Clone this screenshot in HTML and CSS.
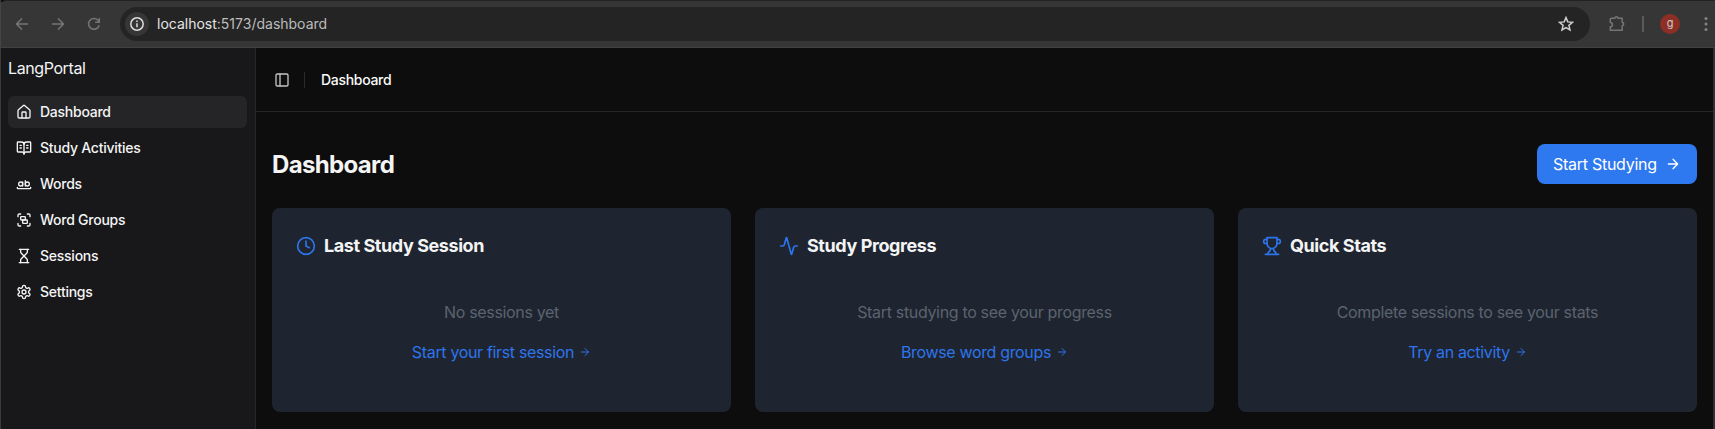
FILE: index.html
```html
<!DOCTYPE html>
<html lang="en">
<head>
<meta charset="utf-8">
<title>LangPortal</title>
<link rel="stylesheet" href="styles.css">
</head>
<body>
<div class="window">
  <header class="browser">
    <div class="browser-nav">
      <svg class="b-icon" viewBox="0 0 16 16"><path d="M14 8H3M8 2.500 2.500 8 8 13.500"/></svg>
      <svg class="b-icon" viewBox="0 0 16 16"><path d="M2 8h11M8 2.500 13.500 8 8 13.500"/></svg>
      <svg class="b-icon" viewBox="0 0 16 16"><path d="M13.200 9.200A5.400 5.400 0 1 1 11.900 4.200L13.200 5.500M13.300 2v4.200H9.100"/></svg>
    </div>
    <div class="address">
      <span class="site-info"><svg class="info-icon" viewBox="0 0 16 16"><circle cx="8" cy="8" r="6.200"/><path d="M8 7.200v4M8 4.500v1.500"/></svg></span>
      <span class="url">localhost<span class="url-rest">:5173/dashboard</span></span>
      <svg class="star" viewBox="0 0 16 16"><path d="m8 1.600 1.800 4.300 4.700.4-3.600 3 1.100 4.600L8 11.500l-4 2.400 1.100-4.600-3.600-3 4.700-.4z"/></svg>
    </div>
    <div class="browser-tools">
      <svg class="puzzle" viewBox="0 0 18 18"><path d="M3.300 3.200h3.600a1.500 1.500 0 0 1 3 0h4.300v4.300a1.500 1.500 0 0 1 0 3v4.800H2.300v-3.500a2.100 2.100 0 0 0 0-4.200V4.200a1 1 0 0 1 1-1z"/></svg>
      <span class="tool-divider"></span>
      <span class="avatar">g</span>
      <svg class="dots" viewBox="0 0 4 16"><circle cx="2" cy="2.500" r="1.500"/><circle cx="2" cy="8" r="1.500"/><circle cx="2" cy="13.500" r="1.500"/></svg>
    </div>
  </header>
  <div class="app">
    <aside class="sidebar">
      <div class="brand"><span class="brand-name">LangPortal</span></div>
      <nav class="menu">
        <a class="item active"><svg class="icon" viewBox="0 0 24 24"><path d="M15 21v-8a1 1 0 0 0-1-1h-4a1 1 0 0 0-1 1v8"/><path d="M3 10a2 2 0 0 1 .709-1.528l7-5.999a2 2 0 0 1 2.582 0l7 5.999A2 2 0 0 1 21 10v9a2 2 0 0 1-2 2H5a2 2 0 0 1-2-2z"/></svg><span>Dashboard</span></a>
        <a class="item"><svg class="icon" viewBox="0 0 24 24"><path d="M12 7v14M16 12h2M16 8h2M6 12h2M6 8h2"/><path d="M3 18a1 1 0 0 1-1-1V4a1 1 0 0 1 1-1h5a4 4 0 0 1 4 4 4 4 0 0 1 4-4h5a1 1 0 0 1 1 1v13a1 1 0 0 1-1 1h-6a3 3 0 0 0-3 3 3 3 0 0 0-3-3z"/></svg><span>Study Activities</span></a>
        <a class="item"><svg class="icon" viewBox="0 0 24 24"><circle cx="7" cy="12" r="3"/><path d="M10 9v6"/><circle cx="17" cy="12" r="3"/><path d="M14 7v8"/><path d="M22 17v1c0 .5-.5 1-1 1H3c-.5 0-1-.5-1-1v-1"/></svg><span>Words</span></a>
        <a class="item"><svg class="icon" viewBox="0 0 24 24"><path d="M3 7V5c0-1.100.9-2 2-2h2M17 3h2c1.100 0 2 .9 2 2v2M21 17v2c0 1.100-.9 2-2 2h-2M7 21H5c-1.100 0-2-.9-2-2v-2"/><rect width="7" height="5" x="7" y="7" rx="1"/><rect width="7" height="5" x="10" y="12" rx="1"/></svg><span>Word Groups</span></a>
        <a class="item"><svg class="icon" viewBox="0 0 24 24"><path d="M5 22h14M5 2h14"/><path d="M17 22v-4.172a2 2 0 0 0-.586-1.414L12 12l-4.414 4.414A2 2 0 0 0 7 17.828V22"/><path d="M7 2v4.172a2 2 0 0 0 .586 1.414L12 12l4.414-4.414A2 2 0 0 0 17 6.172V2"/></svg><span>Sessions</span></a>
        <a class="item"><svg class="icon" viewBox="0 0 24 24"><path d="M12.220 2h-.44a2 2 0 0 0-2 2v.18a2 2 0 0 1-1 1.730l-.43.25a2 2 0 0 1-2 0l-.15-.08a2 2 0 0 0-2.730.73l-.22.38a2 2 0 0 0 .73 2.730l.15.1a2 2 0 0 1 1 1.720v.51a2 2 0 0 1-1 1.740l-.15.09a2 2 0 0 0-.73 2.730l.22.38a2 2 0 0 0 2.730.73l.15-.08a2 2 0 0 1 2 0l.43.25a2 2 0 0 1 1 1.730V20a2 2 0 0 0 2 2h.44a2 2 0 0 0 2-2v-.18a2 2 0 0 1 1-1.730l.43-.25a2 2 0 0 1 2 0l.15.08a2 2 0 0 0 2.730-.73l.22-.39a2 2 0 0 0-.73-2.730l-.15-.08a2 2 0 0 1-1-1.740v-.5a2 2 0 0 1 1-1.740l.15-.09a2 2 0 0 0 .73-2.730l-.22-.38a2 2 0 0 0-2.730-.73l-.15.08a2 2 0 0 1-2 0l-.43-.25a2 2 0 0 1-1-1.730V4a2 2 0 0 0-2-2z"/><circle cx="12" cy="12" r="3"/></svg><span>Settings</span></a>
      </nav>
    </aside>
    <main class="main">
      <div class="topbar">
        <svg class="icon trigger" viewBox="0 0 24 24"><rect width="18" height="18" x="3" y="3" rx="2"/><path d="M9 3v18"/></svg>
        <span class="separator"></span>
        <span class="crumb">Dashboard</span>
      </div>
      <div class="content">
        <div class="heading">
          <h1 class="title">Dashboard</h1>
          <a class="button"><span class="button-text">Start Studying</span><svg class="icon" viewBox="0 0 24 24"><path d="M5 12h14M12 5l7 7-7 7"/></svg></a>
        </div>
        <div class="cards">
          <section class="card">
            <h2 class="card-title"><svg class="card-icon" viewBox="0 0 24 24"><circle cx="12" cy="12" r="10"/><path d="M12 6v6l4 2"/></svg><span>Last Study Session</span></h2>
            <div class="card-body"><p class="empty">No sessions yet</p><a class="link"><span>Start your first session</span><svg class="link-arrow" viewBox="0 0 24 24"><path d="M5 12h14M12 5l7 7-7 7"/></svg></a></div>
          </section>
          <section class="card">
            <h2 class="card-title"><svg class="card-icon" viewBox="0 0 24 24"><path d="M22 12h-2.480a2 2 0 0 0-1.930 1.460l-2.350 8.360a.25.25 0 0 1-.48 0L9.240 2.180a.25.25 0 0 0-.48 0l-2.350 8.360A2 2 0 0 1 4.490 12H2"/></svg><span>Study Progress</span></h2>
            <div class="card-body"><p class="empty">Start studying to see your progress</p><a class="link"><span>Browse word groups</span><svg class="link-arrow" viewBox="0 0 24 24"><path d="M5 12h14M12 5l7 7-7 7"/></svg></a></div>
          </section>
          <section class="card">
            <h2 class="card-title"><svg class="card-icon" viewBox="0 0 24 24"><path d="M6 9H4.500a2.500 2.500 0 0 1 0-5H6M18 9h1.500a2.500 2.500 0 0 0 0-5H18M4 22h16"/><path d="M10 14.660V17c0 .55-.47.98-.97 1.210C7.850 18.750 7 20.240 7 22M14 14.660V17c0 .55.47.98.97 1.210C16.150 18.750 17 20.240 17 22M18 2H6v7a6 6 0 0 0 12 0V2Z"/></svg><span>Quick Stats</span></h2>
            <div class="card-body"><p class="empty">Complete sessions to see your stats</p><a class="link"><span>Try an activity</span><svg class="link-arrow" viewBox="0 0 24 24"><path d="M5 12h14M12 5l7 7-7 7"/></svg></a></div>
          </section>
        </div>
      </div>
    </main>
  </div>
</div>
</body>
</html>
```
FILE: styles.css
```css
* { box-sizing: border-box; margin: 0; }
body { background: #0d0d0d; color: #fafafa; font: 400 16px/24px Inter, "Liberation Sans", sans-serif; overflow: hidden; }
svg { display: block; flex: none; fill: none; stroke: currentColor; stroke-width: 2; stroke-linecap: round; stroke-linejoin: round; }
.window { height: 429px; display: flex; flex-direction: column; box-shadow: inset 1px 0 #3b3b3c, inset -2px 0 #303030; }
.browser { height: 48px; flex: none; display: flex; align-items: center; background: #363636; border-top: 1px solid #222; border-bottom: 1px solid #414342; border-left: 1px solid #454545; border-top-left-radius: 6px; padding-left: 13px; }
.browser-nav { display: flex; gap: 20px; color: #757575; width: 106px; }
.b-icon { width: 16px; height: 16px; stroke-width: 1.5; stroke-linecap: butt; stroke-linejoin: miter; }
.address { flex: none; width: 1470px; height: 34px; border-radius: 17px; background: #242424; display: flex; align-items: center; padding: 0 16px 0 5px; }
.site-info { width: 24px; height: 24px; border-radius: 12px; background: #363636; display: grid; place-items: center; }
.info-icon { width: 16px; height: 16px; stroke-width: 1.5; stroke-linecap: butt; color: #ddd; }
.url { margin-left: 8px; flex: 1; font-size: 14px; letter-spacing: 0; color: #e4e4e4; }
.url-rest { color: #bcbcbc; }
.star { width: 16px; height: 16px; stroke-width: 1.5; stroke-linejoin: miter; color: #cfcfcf; }
.browser-tools { display: flex; align-items: center; color: #757575; padding-left: 18px; }
.puzzle { width: 18px; height: 18px; stroke-width: 1.5; }
.tool-divider { width: 2px; height: 16px; background: #5a5a5a; margin: 0 16px; }
.avatar { width: 20px; height: 20px; border-radius: 10px; background: #8d2f24; color: #ccc; font-size: 11px; line-height: 18px; text-align: center; }
.dots { width: 4px; height: 16px; margin-left: 24px; fill: #858585; stroke: none; }
.app { flex: 1; display: flex; min-height: 0; margin: 0 2px 0 1px; }
.sidebar { width: 255px; flex: none; background: #18181a; border-right: 1px solid #262628; padding: 8px 8px 8px 7px; color: #f4f4f5; }
.brand { height: 24px; letter-spacing: -0.4px; }
.menu { display: flex; flex-direction: column; gap: 4px; margin-top: 16px; }
.item { height: 32px; border-radius: 6px; display: flex; align-items: center; gap: 8px; padding: 0 8px; font-size: 14px; line-height: 20px; font-weight: 500; letter-spacing: -0.25px; }
.active { background: #252527; }
.icon { width: 16px; height: 16px; }
.main { flex: 1; background: #0d0d0d; }
.topbar { height: 64px; border-bottom: 1px solid #262626; display: flex; align-items: center; padding: 0 18px; }
.trigger { color: #c4c4c4; }
.separator { width: 1px; height: 16px; background: #2a2a2a; margin: 0 16px 0 14px; }
.crumb { font-size: 14px; font-weight: 500; letter-spacing: -0.3px; }
.content { padding: 32px 16px 0; }
.heading { height: 40px; display: flex; align-items: center; justify-content: space-between; }
.title { padding-top: 1px; font-size: 24px; line-height: 32px; font-weight: 700; letter-spacing: -0.65px; color: #f4f4f4; }
.button { width: 160px; height: 40px; border-radius: 8px; background: #2e78f0; display: flex; align-items: center; justify-content: space-between; padding: 0 16px; color: #fff; letter-spacing: -0.27px; }
.cards { display: grid; grid-template-columns: repeat(3, 1fr); gap: 24px; margin-top: 24px; }
.card { height: 204px; border-radius: 8px; background: #1e2530; padding: 24px; }
.card-title { display: flex; align-items: center; gap: 8px; font-size: 18px; line-height: 28px; font-weight: 650; letter-spacing: -0.42px; color: #f4f4f4; }
.card-icon { width: 20px; height: 20px; color: #2e74ec; }
.card-body { display: flex; flex-direction: column; align-items: center; gap: 16px; padding-top: 40px; }
.empty { color: #5c636f; letter-spacing: -0.33px; }
.link { display: flex; align-items: center; gap: 5px; color: #2e74ec; letter-spacing: -0.34px; }
.link-arrow { width: 12px; height: 12px; }
```
